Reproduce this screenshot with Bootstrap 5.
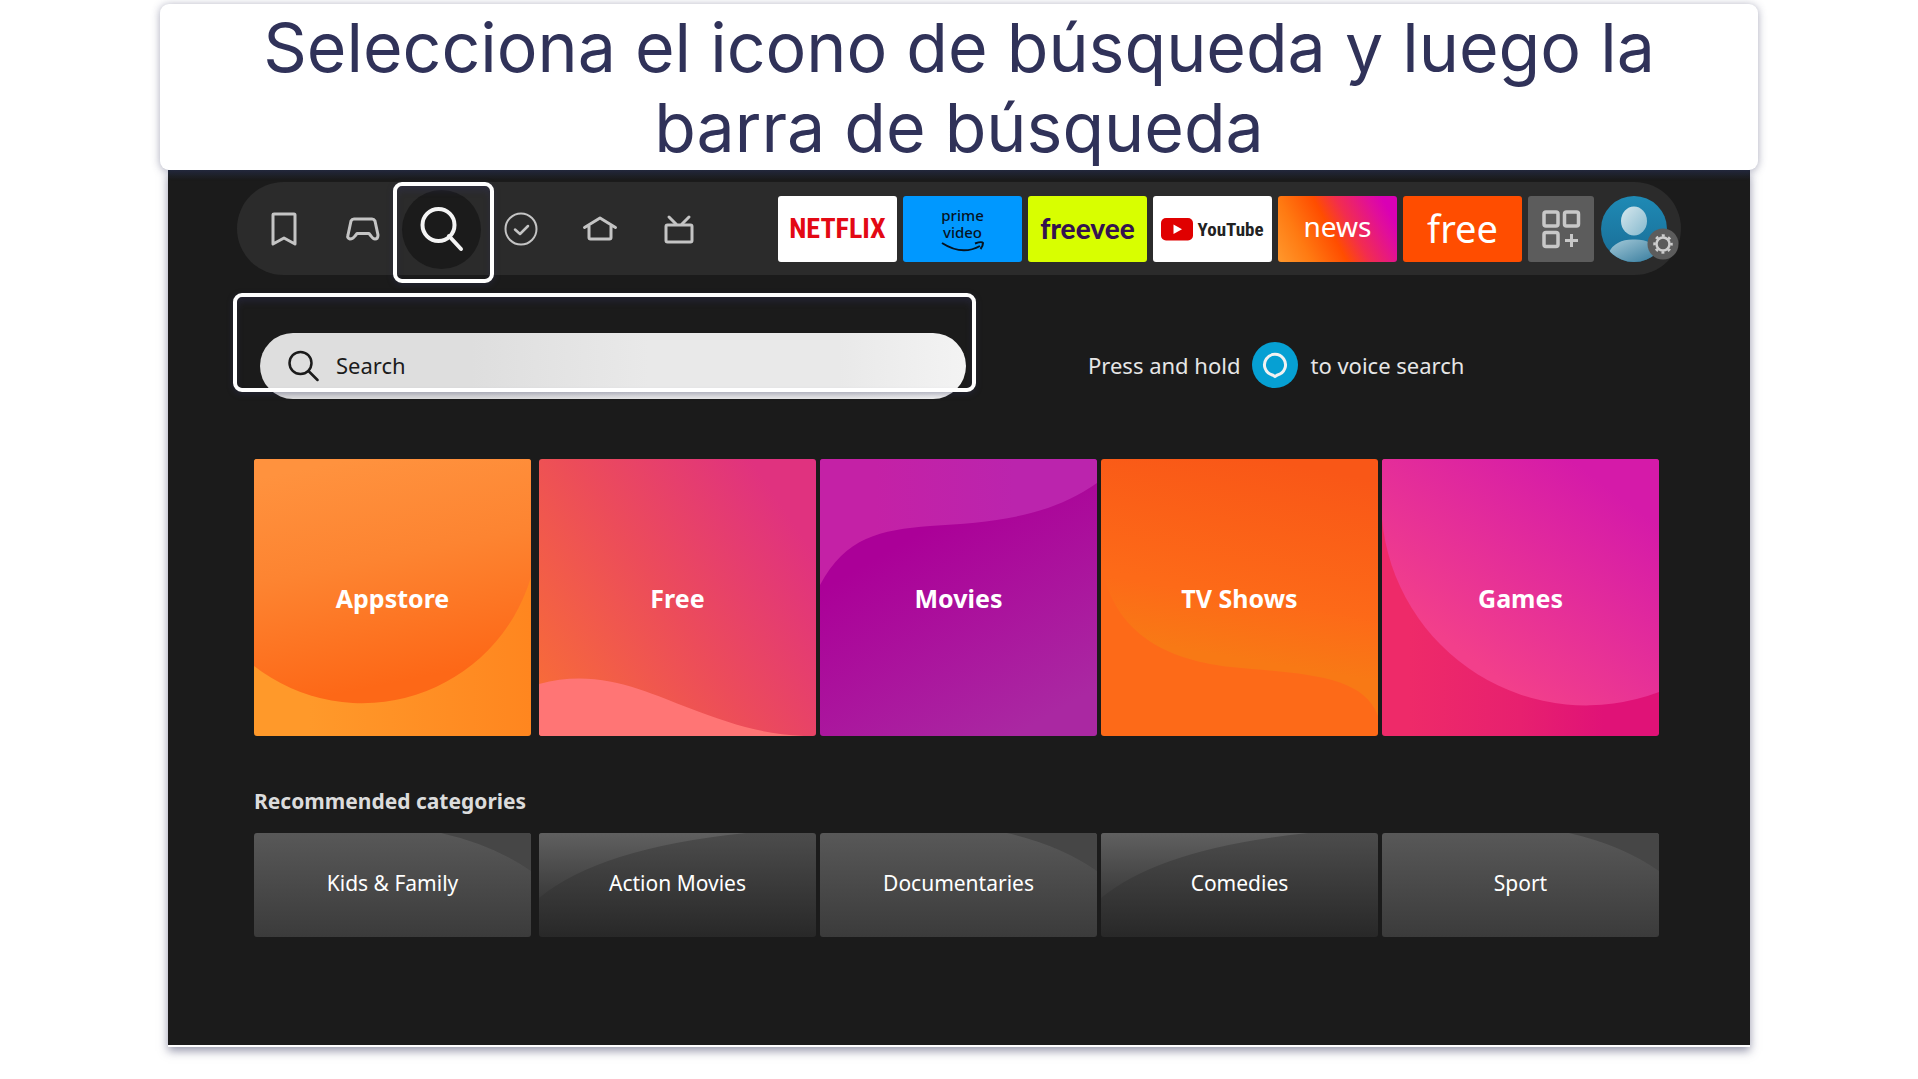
<!DOCTYPE html>
<html lang="es">
<head>
<meta charset="utf-8">
<meta name="viewport" content="width=device-width, initial-scale=1">
<title>Selecciona el icono de búsqueda</title>
<link href="https://cdn.jsdelivr.net/npm/bootstrap@5.3.0/dist/css/bootstrap.min.css" rel="stylesheet">
<style>
  body { background: #fff; font-family: "Noto Sans", "Open Sans", sans-serif; }
  .guide { padding: 4px 160px 24px; }
  .caption-box { position: relative; z-index: 2; background: #fff; border-radius: 9px; padding: 3px 40px; box-shadow: 0 1px 8px rgba(48, 50, 90, .42); }
  .caption-box h1 { font-family: Inter, sans-serif; font-size: 68px; line-height: 80px; font-weight: 400; color: #303259; }
  .tv-screen { margin: 0 8px; padding: 12px 69px 108px; background: linear-gradient(#1f2533, #1b1b1b 10px); border-bottom: 2px solid #fff; box-shadow: 0 4px 9px rgba(48, 50, 90, .5); }
  .top-pill { height: 93px; border-radius: 47px; background: #2b2b2b; padding: 1px 14px 0 7px; }
  .nav-icon { width: 79px; height: 92px; padding: 0; border: 0; background: none; position: relative; display: flex; align-items: center; justify-content: center; }
  .nav-icon svg { fill: none; stroke: #c4c4c4; stroke-width: 3; stroke-linejoin: round; stroke-linecap: round; }
  .nav-icon.current::before { content: ""; position: absolute; width: 79px; height: 79px; border-radius: 50%; background: #1b1b1b; }
  .nav-icon.current svg { position: relative; stroke: #f4f4f4; stroke-width: 4; }
  .marker { position: absolute; border: 4px solid #fff; border-radius: 9px; pointer-events: none; z-index: 1; box-shadow: 0 2px 6px rgba(48, 50, 90, .4), inset 0 5px 6px rgba(48, 50, 90, .35); }
  .marker-icon { left: -9px; top: -1px; width: 101px; height: 101px; }
  .marker-field { left: -27px; right: -10px; top: -40px; height: 99px; }
  .apps { gap: 6px; }
  .app-tile { width: 119px; height: 66px; border-radius: 3px; display: flex; align-items: center; justify-content: center; text-decoration: none; line-height: 1; }
  .netflix { background: #fff; color: #e30914; font: 700 28px/1 "Liberation Sans Narrow", "Roboto Condensed", sans-serif; }
  .prime { background: #0098ff; color: #06131f; flex-direction: column; font-size: 15px; line-height: 17px; font-weight: 500; }
  .freevee { background: #d8ff00; color: #34124f; font: 900 28px/1 Lato, sans-serif; padding-bottom: 3px; }
  .youtube { background: #fff; color: #222; gap: 4px; font: 700 19px/1 "Liberation Sans Narrow", "Roboto Condensed", sans-serif; }
  .news { background: linear-gradient(62deg, #ff982d, #ff7a12 22%, #ff4d00 45%, #f22c50 60%, #e10f99 80%, #d900b5 90%); color: #fff; font-size: 28px; padding-bottom: 6px; }
  .freeapp { background: #ff4d00; color: #fff; font-size: 38px; padding-bottom: 2px; }
  .more-apps { width: 66px; background: #5c5c5c; border: 0; padding: 0; }
  .profile { position: relative; width: 66px; height: 66px; padding: 0; border: 0; background: none; margin-left: 1px; }
  .profile-gear { position: absolute; left: 46px; top: 32px; }
  .search-row { margin: 58px 23px 60px; gap: 122px; }
  .search-area { position: relative; flex: 0 1 706px; }
  .search-pill { height: 66px; border-radius: 33px; background: linear-gradient(90deg, #dedede 30%, #e9e9e9 55%, #e9e9e9 82%, #f3f3f3); padding: 0 28px; }
  .search-pill input { border: 0; background: none; outline: 0; padding: 0 0 2px 17px; font-size: 22px; color: #1b1b1b; }
  .search-pill input::placeholder { color: #1b1b1b; opacity: 1; }
  .voice { font-size: 22px; color: #e6e6e6; gap: 12px; padding-bottom: 2px; }
  .tile-row { gap: 4px; margin: 0 22px 0 17px; }
  .tile-row > :first-child { margin-right: 4px; }
  .art-tile { position: relative; flex: 1 1 0; border-radius: 3px; overflow: hidden; display: flex; align-items: center; justify-content: center; color: #fff; text-decoration: none; }
  .art-tile > svg { position: absolute; inset: 0; width: 100%; height: 100%; }
  .art-tile > span { position: relative; }
  .big { aspect-ratio: 1; font-size: 25px; font-weight: 700; padding-top: 2px; }
  .small-cat { height: 104px; font-size: 21px; padding-bottom: 2px; }
  .section-name { font-size: 21px; line-height: 30px; font-weight: 700; color: #dcdcdc; margin: 50px 17px 17px; }
</style>
</head>
<body>
<main class="guide">
  <div class="caption-box text-center"><h1 class="m-0">Selecciona el icono de búsqueda y luego la<br>barra de búsqueda</h1></div>
  <section class="tv-screen">
    <nav class="top-pill d-flex align-items-center justify-content-between" aria-label="Main">
      <div class="d-flex">
        <button class="nav-icon" aria-label="Saved"><svg width="40" height="40"><path d="M9 5.500Q9 5 10 5H30Q31 5 31 6V35L20 29 9 35Z"/></svg></button>
        <button class="nav-icon" aria-label="Games"><svg width="40" height="40"><path d="M11 10H29Q31 10 32 12L35 26Q35 30 32 30 30 30 28 27L26 24.500H14L12 27Q10 30 7 30 4 29 5 26L8 12Q9 10 11 10Z"/></svg></button>
        <button class="nav-icon current" aria-label="Find"><svg width="48" height="48"><circle cx="20.500" cy="20" r="16"/><path d="M31 31 43 44"/></svg><span class="marker marker-icon"></span></button>
        <button class="nav-icon" aria-label="Watched"><svg width="40" height="40"><circle cx="20" cy="20" r="15.500" stroke-width="2"/><path stroke-width="2.500" d="M14 20.500 19 25 27 17"/></svg></button>
        <button class="nav-icon" aria-label="Home"><svg width="40" height="40"><path d="M4.500 18.500 20 9 35.500 18.500M9 17V28.500Q9 30 10.500 30H29.500Q31 30 31 28.500V17"/></svg></button>
        <button class="nav-icon" aria-label="Live TV"><svg width="40" height="40"><rect x="7" y="16" width="26" height="17" rx="1.500"/><path d="M10 8 17 15M30 8 23 15"/></svg></button>
      </div>
      <div class="apps d-flex">
        <a class="app-tile netflix" href="#">NETFLIX</a>
        <a class="app-tile prime" href="#"><span>prime</span><span>video</span><svg width="44" height="11" fill="none" stroke="#06131f" stroke-width="2"><path d="M1 2Q21 15 39 5M34 2.500Q41 0 42 2 42 5 39.500 8"/></svg></a>
        <a class="app-tile freevee" href="#">freevee</a>
        <a class="app-tile youtube" href="#"><svg width="32" height="23"><rect width="32" height="22.500" rx="5" fill="#e00000"/><path d="M12.500 6.500 21 11.300 12.500 16Z" fill="#fff"/></svg>YouTube</a>
        <a class="app-tile news" href="#">news</a>
        <a class="app-tile freeapp" href="#">free</a>
        <button class="app-tile more-apps" aria-label="All apps"><svg width="40" height="40" fill="none" stroke="#c8c8c8" stroke-width="3.500"><rect x="3" y="3" width="14" height="14" rx="2"/><rect x="23.500" y="3" width="14" height="14" rx="2"/><rect x="3" y="23.500" width="14" height="14" rx="2"/><path d="M30.500 25V38M24 31.500H37" stroke-width="3"/></svg></button>
        <button class="profile" aria-label="Profile">
          <svg width="66" height="66" class="d-block"><defs><linearGradient id="pb" x2="0" y2="1"><stop stop-color="#1f8ab5"/><stop offset="1" stop-color="#196c95"/></linearGradient><linearGradient id="pf" x2="1" y2="1"><stop stop-color="#d7e8ee"/><stop offset="1" stop-color="#84b8cd"/></linearGradient><linearGradient id="pt" x2="1" y2="1"><stop stop-color="#a5cad9"/><stop offset="1" stop-color="#33799b"/></linearGradient><clipPath id="pc"><circle cx="33" cy="33" r="33"/></clipPath></defs><g clip-path="url(#pc)"><rect width="66" height="66" fill="url(#pb)"/><ellipse cx="33" cy="25" rx="13" ry="14.500" fill="url(#pf)"/><path d="M8 56Q15 43 33 43.500 51 43 58 56V66H8Z" fill="url(#pt)"/></g></svg>
          <svg class="profile-gear" width="32" height="32"><circle cx="16" cy="16" r="15.500" fill="#5c5c5c"/><g fill="none" stroke="#cecece"><circle cx="16" cy="16" r="6.500" stroke-width="2.500"/><circle cx="16" cy="16" r="8.500" stroke-width="2.500" stroke-dasharray="3 3.676" stroke-dashoffset="1.500"/></g></svg>
        </button>
      </div>
    </nav>

    <div class="search-row d-flex align-items-center">
      <div class="search-area">
        <label class="search-pill d-flex align-items-center">
          <svg width="31" height="32" fill="none" stroke="#1b1b1b" stroke-width="2.500" stroke-linecap="round"><circle cx="12.500" cy="13" r="11"/><path d="M20.500 21 29.500 30"/></svg>
          <input class="flex-grow-1" type="text" placeholder="Search" aria-label="Search">
        </label>
        <span class="marker marker-field"></span>
      </div>
      <div class="voice d-flex align-items-center text-nowrap">
        <span>Press and hold</span>
        <svg width="46" height="46"><circle cx="23" cy="23" r="23" fill="#06a0d3"/><path d="M20.500 33A10.500 10.500 0 1 1 25.500 33L23 34.500Z" fill="none" stroke="#f2f2f2" stroke-width="3"/></svg>
        <span>to voice search</span>
      </div>
    </div>

    <div class="tile-row d-flex">
      <a class="art-tile big" href="#"><svg viewBox="0 0 277 277" preserveAspectRatio="none"><defs><linearGradient id="a1" x2="1" y2="0"><stop offset=".2" stop-color="#ff992a"/><stop offset="1" stop-color="#ff861f"/></linearGradient><linearGradient id="a2" x1="0" y1="20" x2="45" y2="243" gradientUnits="userSpaceOnUse"><stop stop-color="#ff923e"/><stop offset=".45" stop-color="#fd8431"/><stop offset="1" stop-color="#fd6817"/></linearGradient></defs><rect width="277" height="277" fill="url(#a1)"/><path d="M0 0H277V118A176 176 0 0 1 0 207Z" fill="url(#a2)"/></svg><span>Appstore</span></a>
      <a class="art-tile big" href="#"><svg viewBox="0 0 277 277" preserveAspectRatio="none"><defs><linearGradient id="b1" x1="0" y1=".8" x2=".9" y2=".2"><stop stop-color="#f76a3a"/><stop offset=".5" stop-color="#ec4c5a"/><stop offset="1" stop-color="#e0327f"/></linearGradient></defs><rect width="277" height="277" fill="url(#b1)"/><path d="M0 225C60 208 110 234 150 249S220 275 265 277H0Z" fill="#ff7575"/></svg><span>Free</span></a>
      <a class="art-tile big" href="#"><svg viewBox="0 0 277 277" preserveAspectRatio="none"><defs><linearGradient id="c1" x1=".3" y1=".3" x2=".7" y2="1"><stop stop-color="#ab0098"/><stop offset="1" stop-color="#aa28a2"/></linearGradient><linearGradient id="c2"><stop offset=".2" stop-color="#c421a6"/><stop offset=".7" stop-color="#bb24ad"/></linearGradient></defs><rect width="277" height="277" fill="url(#c1)"/><path d="M0 126C26 78 60 71 110 67 170 63 225 60 277 24V0H0Z" fill="url(#c2)"/></svg><span>Movies</span></a>
      <a class="art-tile big" href="#"><svg viewBox="0 0 277 277" preserveAspectRatio="none"><defs><linearGradient id="d1" x1=".6" y1="0" x2=".5" y2=".5"><stop stop-color="#f95717"/><stop offset="1" stop-color="#fd6a18"/></linearGradient><linearGradient id="d2" x1="0" y1="115" x2="-10" y2="175" gradientUnits="userSpaceOnUse"><stop stop-color="#f87915" stop-opacity="0"/><stop offset="1" stop-color="#f87915"/></linearGradient></defs><rect width="277" height="277" fill="url(#d1)"/><path d="M0 100C10 180 75 202 130 208 200 215 262 215 277 257V100Z" fill="url(#d2)"/></svg><span>TV Shows</span></a>
      <a class="art-tile big" href="#"><svg viewBox="0 0 277 277" preserveAspectRatio="none"><defs><linearGradient id="e1"><stop offset=".1" stop-color="#ee2a69"/><stop offset=".5" stop-color="#e7206f"/><stop offset=".8" stop-color="#e01277"/></linearGradient><linearGradient id="e2" x1=".25" y1=".75" x2=".8" y2=".1"><stop stop-color="#f23f8b"/><stop offset="1" stop-color="#d51aa9"/></linearGradient></defs><rect width="277" height="277" fill="url(#e1)"/><path d="M0 60A205 205 0 0 0 277 233V0H0Z" fill="url(#e2)"/></svg><span>Games</span></a>
    </div>

    <h2 class="section-name">Recommended categories</h2>
    <svg width="0" height="0" class="d-block"><defs>
      <linearGradient id="g1" x2="0" y2="1"><stop stop-color="#585858"/><stop offset="1" stop-color="#3b3b3b"/></linearGradient>
      <linearGradient id="g2" x2="0" y2="1"><stop stop-color="#4c4c4c"/><stop offset="1" stop-color="#282828"/></linearGradient>
      <linearGradient id="g3" x2="0" y2="1"><stop stop-color="#606060"/><stop offset="1" stop-color="#3a3a3a"/></linearGradient>
      <symbol id="arcR" viewBox="0 0 277 104" preserveAspectRatio="none"><rect width="277" height="104" fill="url(#g1)"/><path d="M187 0Q240 12 277 38V0Z" fill="#464646"/></symbol>
      <symbol id="arcL" viewBox="0 0 277 104" preserveAspectRatio="none"><rect width="277" height="104" fill="url(#g2)"/><path d="M0 0V65Q60 15 207 0Z" fill="url(#g3)"/></symbol>
    </defs></svg>
    <div class="tile-row d-flex">
      <a class="art-tile small-cat" href="#"><svg><use href="#arcR"/></svg><span>Kids &amp; Family</span></a>
      <a class="art-tile small-cat" href="#"><svg><use href="#arcL"/></svg><span>Action Movies</span></a>
      <a class="art-tile small-cat" href="#"><svg><use href="#arcR"/></svg><span>Documentaries</span></a>
      <a class="art-tile small-cat" href="#"><svg><use href="#arcL"/></svg><span>Comedies</span></a>
      <a class="art-tile small-cat" href="#"><svg><use href="#arcR"/></svg><span>Sport</span></a>
    </div>
  </section>
</main>
<script src="https://cdn.jsdelivr.net/npm/bootstrap@5.3.0/dist/js/bootstrap.bundle.min.js"></script>
</body>
</html>
